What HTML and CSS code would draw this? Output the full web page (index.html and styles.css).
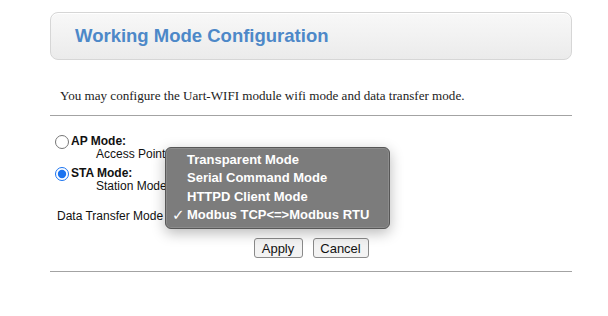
FILE: index.html
```html
<html>
    <head>
        <title>Working Mode Configuration</title>

        <link rel="stylesheet" href="styles.css">
    </head>
    <body>
        <div class="page">
            <div class="titleBox">
                <h2>Working Mode Configuration</h2>
            </div>

            <p class="intro">You may configure the Uart-WIFI module wifi mode and data transfer mode.</p>
            <hr />

            <form class="modeForm">
                <div class="radioRow">
                    <input type="radio" name="mode" value="ap" />
                    <b>AP Mode:</b>
                </div>
                <div class="descRow">Access Point</div>

                <div class="radioRow sta">
                    <input type="radio" name="mode" value="sta" checked />
                    <b>STA Mode:</b>
                </div>
                <div class="descRow">Station Mode</div>

                <div class="transferRow">
                    <span class="transferLabel">Data Transfer Mode</span>
                    <select class="transferSelect">
                        <option>Transparent Mode</option>
                        <option>Serial Command Mode</option>
                        <option>HTTPD Client Mode</option>
                        <option selected>Modbus TCP&lt;=&gt;Modbus RTU</option>
                    </select>

                    <!-- the open select list -->
                    <div class="popup">
                        <div class="popupItem">Transparent Mode</div>
                        <div class="popupItem">Serial Command Mode</div>
                        <div class="popupItem">HTTPD Client Mode</div>
                        <div class="popupItem checked"><span class="check">&#10003;</span>Modbus TCP&lt;=&gt;Modbus RTU</div>
                    </div>
                </div>

                <div class="buttonRow">
                    <input type="button" value="Apply" class="btn apply" />
                    <input type="button" value="Cancel" class="btn cancel" />
                </div>
            </form>
            <hr class="bottomLine" />
        </div>
    </body>
</html>
```

FILE: styles.css
```css
body{
    margin: 0;
    background: white;
    font-family: "Liberation Sans", Arial, sans-serif;
    color: #111;
}

.page{
    width: 522px;
    padding: 12px 0 0 50px;
}

.titleBox{
    height: 46px;
    border: 1px solid #d6d6d6;
    border-radius: 8px;
    background: linear-gradient(#f8f8f8, #ebebeb);
    box-shadow: inset 0 1px 0 #ffffff;
    display: flex;
    align-items: center;
    padding-left: 24px;
}

.titleBox h2{
    margin: 0;
    font-size: 18.5px;
    font-weight: bold;
    color: #4d88c8;
}

.intro{
    font-family: "Liberation Serif", "Times New Roman", serif;
    font-size: 13.1px;
    line-height: 16px;
    margin: 28px 0 0 0;
    padding-left: 10px;
    color: #222;
}

hr{
    border: 0;
    border-top: 1px solid #a3a3a3;
    margin: 11px 0 0 0;
    height: 0;
}

.modeForm{
    margin: 19px 0 0 0;
    font-size: 12px;
}

.radioRow{
    height: 13px;
    line-height: 13px;
    display: flex;
    align-items: center;
    padding-left: 5px;
}

.radioRow.sta{
    margin-top: 6px;
}

.radioRow input{
    width: 14px;
    height: 14px;
    margin: 0 2px 0 0;
    accent-color: #1a73f0;
}

.descRow{
    height: 13px;
    line-height: 13px;
    padding-left: 46px;
}

.transferRow{
    position: relative;
    margin-top: 13px;
    height: 20px;
    display: flex;
    align-items: center;
    padding-left: 7px;
}

.transferLabel{
    font-size: 12px;
    width: 108px;
    white-space: nowrap;
}

.transferSelect{
    margin-left: 8px;
    width: 210px;
    height: 20px;
    font-size: 13px;
}

.popup{
    position: absolute;
    left: 115px;
    top: -59px;
    width: 223px;
    padding: 2.75px 0;
    background: #7c7c7c;
    border: 1px solid #575757;
    border-radius: 6px;
    box-shadow: 0 4px 14px rgba(0, 0, 0, 0.28), inset 0 0 0 1px #8c8c8c;
    color: white;
    font-size: 13px;
    font-weight: bold;
}

.popupItem{
    position: relative;
    height: 18.5px;
    line-height: 18.5px;
    padding-left: 21px;
    white-space: nowrap;
}

.check{
    position: absolute;
    left: 6px;
    top: 0;
    font-family: "DejaVu Sans", sans-serif;
    font-size: 15px;
    font-weight: normal;
}

.buttonRow{
    margin-top: 12px;
    display: flex;
    justify-content: center;
    gap: 10px;
}

.btn{
    height: 20px;
    padding: 0 6px;
    font-family: "Liberation Sans", Arial, sans-serif;
    font-size: 13px;
    color: #111;
    background: #f3f3f3;
    border: 1px solid #8a8a8a;
    border-radius: 3px;
}

.apply{
    width: 49px;
}

.cancel{
    width: 56px;
}

.bottomLine{
    margin-top: 13px;
}
```
